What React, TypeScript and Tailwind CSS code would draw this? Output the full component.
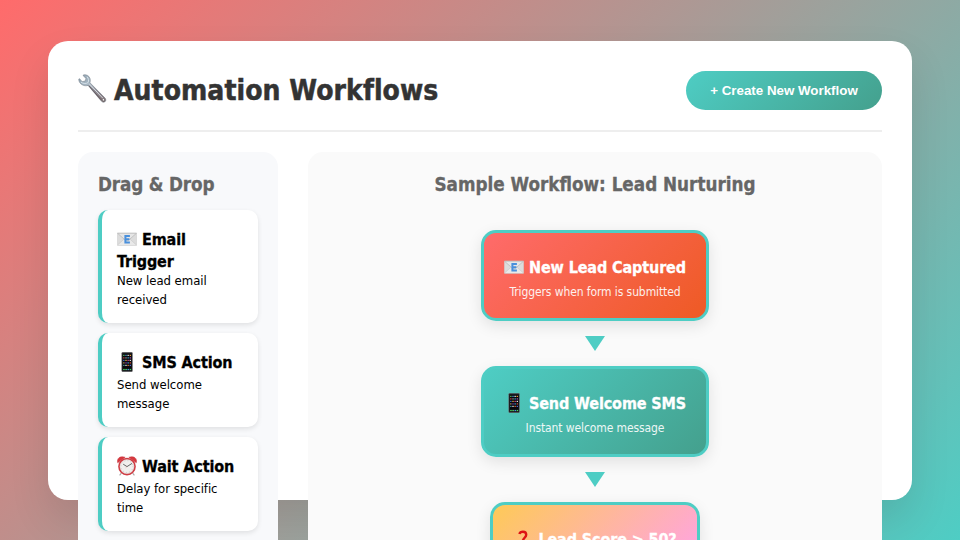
import type { ReactNode } from 'react'

type IconProps = { className?: string }

function Wrench({ className }: IconProps) {
  return (
    <svg viewBox="0 0 29 29" className={className}>
      <defs>
        <linearGradient id="steel" x1="0" y1="0" x2="1" y2="1">
          <stop offset="0" stopColor="#8fa3b1" />
          <stop offset="0.35" stopColor="#a9b9c5" />
          <stop offset="0.6" stopColor="#8d8a93" />
          <stop offset="1" stopColor="#7b6a6c" />
        </linearGradient>
      </defs>
      <path
        d="M5.4 0.9 C8.2 0.2 11 1.6 12 4.4 C12.5 6 12.3 7.4 12 8.8 L27 24 C28.2 25.4 28 27 26.9 27.8 C25.7 28.6 24.2 28.3 23.3 27.1 L10 11.4 C8.4 12 6.4 11.9 4.6 11 C2.2 9.8 0.5 7.6 0.8 5 L1.6 4.7 L4.2 7.7 L7.2 7 L8 4.4 L5.2 1.8 Z"
        fill="url(#steel)"
        stroke="#6d7780"
        strokeWidth="0.5"
      />
      <path d="M11.2 9.8 L25 24.4" stroke="#d7dce1" strokeWidth="1" />
      <path d="M10.8 11.6 L22.8 25.6" stroke="#5c4d50" strokeWidth="0.8" />
      <path d="M9 2.8 C10.6 4.3 10.9 6.8 10.2 8.4 C8.6 9.8 5.4 10 3 8.2" stroke="#d5e0e8" strokeWidth="1" fill="none" />
      <circle cx="25.4" cy="25.8" r="1.2" fill="#fff" stroke="#5b5356" strokeWidth="0.7" />
    </svg>
  )
}

function Envelope({ className }: IconProps) {
  return (
    <svg viewBox="0 0 20 20" className={className}>
      <rect x="0.3" y="4" width="19.4" height="12.4" rx="0.6" fill="#dcdcdc" stroke="#c8c8c8" strokeWidth="0.5" />
      <path d="M0.6 16 L7.6 9.6 L10 11 L12.4 9.6 L19.4 16" fill="#e9e9e9" stroke="#c2c2c2" strokeWidth="0.5" />
      <path d="M0.6 4.3 L8.6 11.4 Q10 12.4 11.4 11.4 L19.4 4.3 Z" fill="#e6e6e6" stroke="#b0b0b0" strokeWidth="0.6" />
      <path d="M12.9 6.9 H8.4 V13.5 H12.9 M8.4 10.2 H12.4" fill="none" stroke="#4a90dc" strokeWidth="2" />
    </svg>
  )
}

const appDots = [
  '#57c15a', '#4a90d9', '#e8e8e8', '#f0a030',
  '#e04f4f', '#a0a0a0', '#38b0d8', '#b050c8',
  '#3878d8', '#e8b838', '#d84090', '#e8e8e8',
  '#c8a060', '#8840c0', '#40a8e8', '#e85838',
  '#38a0a8', '#e8e8e8', '#e07030', '#5870d8',
]

function Phone({ className }: IconProps) {
  return (
    <svg viewBox="0 0 20 20" className={className}>
      <rect x="4.8" y="0.3" width="10.6" height="19.4" rx="0.9" fill="#17171b" stroke="#77777a" strokeWidth="0.6" />
      <rect x="5.7" y="2.2" width="8.8" height="15.6" fill="#08080d" />
      {appDots.map((c, i) => (
        <rect key={i} x={6.2 + (i % 4) * 2.15} y={2.8 + Math.floor(i / 4) * 2.5} width="1.3" height="1.2" fill={c} />
      ))}
      {['#4ad860', '#58d870', '#4890e8', '#48d860'].map((c, i) => (
        <rect key={i} x={6.2 + i * 2.15} y="16.9" width="1.5" height="1.2" fill={c} />
      ))}
    </svg>
  )
}

function AlarmClock({ className }: IconProps) {
  return (
    <svg viewBox="0 0 20 20" className={className}>
      <path d="M4.4 17 L2.6 19.4 M15.6 17 L17.4 19.4" stroke="#a8a4a4" strokeWidth="1.1" />
      <path d="M0.7 6.8 C-0.5 2.6 2.8 -0.6 8.2 1.3 Z" fill="#d8383f" stroke="#c2323a" strokeWidth="0.5" />
      <path d="M19.3 6.8 C20.5 2.6 17.2 -0.6 11.8 1.3 Z" fill="#d8383f" stroke="#c2323a" strokeWidth="0.5" />
      <circle cx="10" cy="10.6" r="8" fill="#f1efed" stroke="#cf3d44" strokeWidth="1.7" />
      <circle cx="10" cy="10.6" r="6.9" fill="none" stroke="#dcc9c8" strokeWidth="0.5" />
      <circle cx="10" cy="10.6" r="5.9" fill="none" stroke="#9a9a9a" strokeWidth="0.7" strokeDasharray="0.5 2.59" />
      <path d="M6.2 8.2 L10 10.6 L15 7.4" fill="none" stroke="#444" strokeWidth="0.8" />
      <path d="M10 10.6 L8.4 12" stroke="#d88" strokeWidth="0.4" />
    </svg>
  )
}

function Question({ className }: IconProps) {
  return (
    <svg viewBox="0 0 20 20" className={className}>
      <path
        d="M6.4 5 C7.2 2.2 13.2 1.6 13.2 5.8 C13.2 8.8 9.8 8.8 9.8 12.6"
        fill="none"
        stroke="#dd1414"
        strokeWidth="2.4"
      />
      <circle cx="9.8" cy="16.8" r="1.7" fill="#dd1414" />
    </svg>
  )
}

type ItemProps = { icon: ReactNode; title: string[]; lines: string[] }

function PaletteItem({ icon, title, lines }: ItemProps) {
  return (
    <div className="mb-2.5 rounded-[10px] border-l-4 border-[#4ecdc4] bg-white pt-[18px] pr-[15px] pb-[14px] pl-[15px] text-black shadow-[0_2px_5px_rgba(0,0,0,0.1)]">
      <div className="flex h-[22px] items-center gap-[5px] text-[16px] leading-[22px] font-bold tracking-[-0.12px] whitespace-nowrap [-webkit-text-stroke:0.3px]">
        {icon}
        <span className="pt-[2px]">{title[0]}</span>
      </div>
      {title[1] ? (
        <div className="-mb-px h-[22px] text-[16px] leading-[24px] font-bold tracking-[-0.12px] [-webkit-text-stroke:0.3px]">{title[1]}</div>
      ) : (
        <div className="h-[2px]" />
      )}
      {lines.map((l) => (
        <div key={l} className="text-[13px] leading-[19px] tracking-[-0.04px] whitespace-nowrap">
          {l}
        </div>
      ))}
    </div>
  )
}

type NodeProps = { icon: ReactNode; title: string; sub: string; className: string }

function FlowNode({ icon, title, sub, className }: NodeProps) {
  return (
    <div
      className={`h-[91px] shrink-0 rounded-[15px] border-[3px] border-[#4ecdc4] pt-[23px] text-center text-white shadow-[0_5px_15px_rgba(0,0,0,0.1)] ${className}`}
    >
      <div className="flex h-[22px] items-center justify-center gap-[5px] text-[16px] leading-[22px] font-bold tracking-[-0.12px] whitespace-nowrap [-webkit-text-stroke:0.3px]">
        {icon}
        <span className="pt-[2px]">{title}</span>
      </div>
      <div className="mt-1.5 text-[12px] leading-[16px] tracking-[-0.1px] whitespace-nowrap opacity-90">{sub}</div>
    </div>
  )
}

function Arrow() {
  return (
    <div className="my-[15px] h-0 w-0 shrink-0 border-x-[10px] border-t-[15px] border-x-transparent border-t-[#4ecdc4]" />
  )
}

export default function App() {
  return (
    <div className="h-[540px] w-[960px] overflow-hidden bg-[linear-gradient(135deg,#ff6b6b_0%,#4ecdc4_100%)] pt-[41px] font-['DejaVu_Sans_Condensed','DejaVu_Sans',sans-serif]">
      <div className="mx-auto h-[459px] w-[864px] rounded-[20px] bg-white p-[30px] shadow-[0_20px_40px_rgba(0,0,0,0.1)]">
        <header className="flex h-[61px] items-start justify-between border-b-2 border-[#eee]">
          <h1 className="flex h-[39px] items-center gap-[7px] text-[28px] leading-[39px] font-bold tracking-[0.06px] whitespace-nowrap text-[#333] [-webkit-text-stroke:0.5px]">
            <Wrench className="-mt-1 h-[29px] w-[29px] shrink-0" />
            <span>Automation Workflows</span>
          </h1>
          <button className="h-[39px] w-[196px] rounded-[25px] bg-[linear-gradient(135deg,#4ecdc4,#44a08d)] font-['Liberation_Sans',Arial,sans-serif] text-[13.333px] leading-[15px] font-bold whitespace-nowrap text-white">
            + Create New Workflow
          </button>
        </header>
        <div className="mt-5 flex gap-[30px]">
          <aside className="h-[560px] w-[200px] shrink-0 rounded-[15px] bg-[#f8f9fb] p-5">
            <h3 className="mb-[13px] text-[18.72px] leading-[25px] font-bold tracking-[-0.15px] text-[#666] [-webkit-text-stroke:0.3px]">
              Drag &amp; Drop
            </h3>
            <PaletteItem
              icon={<Envelope className="h-5 w-5 shrink-0" />}
              title={['Email', 'Trigger']}
              lines={['New lead email', 'received']}
            />
            <PaletteItem
              icon={<Phone className="h-5 w-5 shrink-0" />}
              title={['SMS Action']}
              lines={['Send welcome', 'message']}
            />
            <PaletteItem
              icon={<AlarmClock className="h-5 w-5 shrink-0" />}
              title={['Wait Action']}
              lines={['Delay for specific', 'time']}
            />
          </aside>
          <main className="flex h-[560px] flex-1 flex-col items-center rounded-[15px] bg-[#fafafa] p-5">
            <h3 className="mb-[33px] text-[18.72px] leading-[25px] font-bold whitespace-nowrap text-[#666] [-webkit-text-stroke:0.3px]">
              Sample Workflow: Lead Nurturing
            </h3>
            <FlowNode
              icon={<Envelope className="h-5 w-5 shrink-0" />}
              title="New Lead Captured"
              sub="Triggers when form is submitted"
              className="w-[228px] bg-[linear-gradient(135deg,#ff6b6b,#ee5a24)]"
            />
            <Arrow />
            <FlowNode
              icon={<Phone className="h-5 w-5 shrink-0" />}
              title="Send Welcome SMS"
              sub="Instant welcome message"
              className="w-[228px] bg-[linear-gradient(135deg,#4ecdc4,#44a08d)]"
            />
            <Arrow />
            <FlowNode
              icon={<Question className="h-5 w-5 shrink-0" />}
              title="Lead Score > 50?"
              sub="Check engagement"
              className="w-[210px] bg-[linear-gradient(135deg,#feca57,#ff9ff3)]"
            />
          </main>
        </div>
      </div>
    </div>
  )
}
